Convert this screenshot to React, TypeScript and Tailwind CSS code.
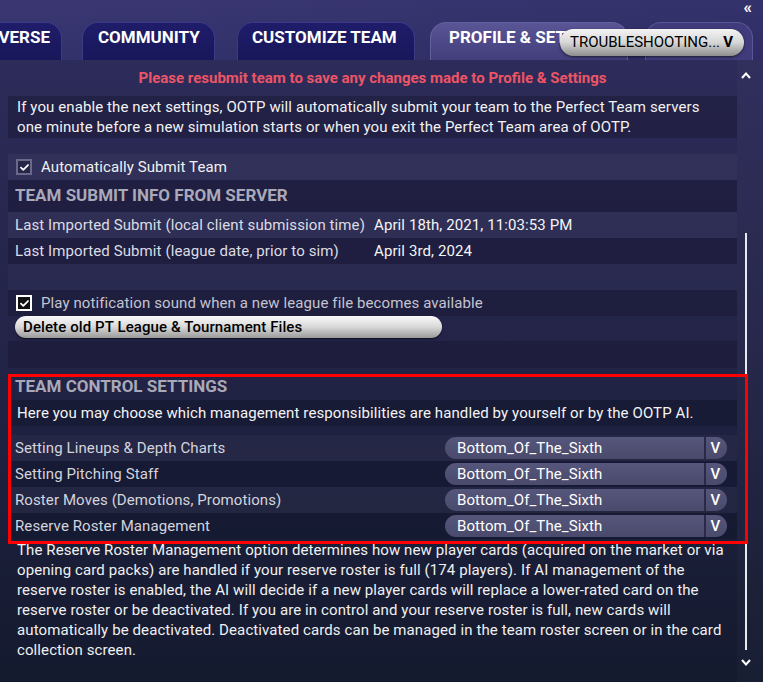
import React from "react";

const TABS = [
  { label: "VERSE", cls: "w-[70px] -ml-[8px] justify-end pr-[11px] rounded-tl-none" },
  { label: "COMMUNITY", cls: "w-[133px] ml-[20px] pl-[15px]" },
  { label: "CUSTOMIZE TEAM", cls: "w-[178px] ml-[22px] pl-[14px]" },
  { label: "PROFILE & SETTINGS", cls: "w-[198px] ml-[15px] pl-[18px]", active: true },
  { label: "", cls: "w-[108px] ml-[17px]", faded: true },
];

const CONTROL_ROWS = [
  "Setting Lineups & Depth Charts",
  "Setting Pitching Staff",
  "Roster Moves (Demotions, Promotions)",
  "Reserve Roster Management",
];

function Check({ bright }: { bright?: boolean }) {
  return (
    <span
      className={`flex h-[16px] w-[16px] items-center justify-center border-2 ${
        bright ? "border-white bg-[#111]" : "border-[#6a6a88] bg-[#26264a]"
      }`}
    >
      <svg width="9" height="7" viewBox="0 0 10 8" fill="none">
        <path d="M1 4.2l2.6 2.4L9 1.2" stroke="#fff" strokeWidth="2" strokeLinecap="round" strokeLinejoin="round" />
      </svg>
    </span>
  );
}

function Chevron({ up }: { up?: boolean }) {
  return (
    <svg width="10" height="7" viewBox="0 0 10 7" fill="none">
      <path d={up ? "M1 6l4-4.5L9 6" : "M1 1l4 4.5L9 1"} stroke="#fff" strokeWidth="2" strokeLinejoin="miter" />
    </svg>
  );
}

function Dropdown() {
  return (
    <div className="flex h-[22px] w-[282px] items-stretch overflow-hidden rounded-full bg-gradient-to-b from-[#56567c] to-[#4a4a6c]">
      <span className="flex-1 pl-[12px] text-[15px] leading-[22px] text-white">Bottom_Of_The_Sixth</span>
      <span className="w-[2px] bg-[#2a2a48]" />
      <span className="flex w-[21px] items-center justify-center pr-[2px] text-[15px] font-medium text-white">V</span>
    </div>
  );
}

export default function App() {
  return (
    <div
      className="relative h-[682px] w-[763px] overflow-hidden bg-gradient-to-b from-[#2f2d5e] via-[#232448] to-[#141a2e] text-white"
      style={{ fontFamily: "Roboto, 'Noto Sans', sans-serif" }}
    >
      {/* Tab strip */}
      <div className="relative h-[60px] bg-gradient-to-br from-[#3a3773] via-[#34326b] to-[#2e2c62]">
        <span className="absolute right-[11px] top-[-1px] text-[17px] font-bold leading-none text-white">«</span>
        <div className="flex items-end pt-[22px]">
          {TABS.map((t, i) => (
            <div
              key={i}
              className={`flex h-[38px] shrink-0 items-start pt-[2px] ${t.cls} rounded-t-[16px] border-x border-t ${
                t.active
                  ? "border-[#6460a0] bg-gradient-to-b from-[#5a5696] to-[#423e7c]"
                  : t.faded
                  ? "border-[#5a5798] bg-[#403c7c]"
                  : "border-[#3c3a86] bg-gradient-to-b from-[#1f1d6a] to-[#18175a]"
              }`}
            >
              <span className="whitespace-nowrap text-[17px] font-bold text-white">{t.label}</span>
            </div>
          ))}
        </div>
        <div className="absolute left-[560px] top-[29px] flex h-[27px] w-[184px] items-center justify-between rounded-full bg-gradient-to-b from-[#f4f4f4] via-[#d6d6d6] to-[#8e8e8e] pl-[10px] pr-[11px] shadow-[0_1px_3px_rgba(0,0,0,0.6)]">
          <span className="text-[15px] leading-none text-black">TROUBLESHOOTING...</span>
          <span className="text-[15px] font-bold leading-none text-black">V</span>
        </div>
      </div>

      {/* Body */}
      <div className="flex">
        <div className="w-[737px] pl-[8px] text-[15px] tracking-[0.1px]">
          <div className="flex h-[36px] items-center justify-center text-[15px] font-bold tracking-normal text-[#ec5566]">
            Please resubmit team to save any changes made to Profile &amp; Settings
          </div>

          <div className="whitespace-nowrap bg-[#1f1e3e]/70 px-[9px] py-[1px] leading-[20px] text-[#f2f2f2]">
            If you enable the next settings, OOTP will automatically submit your team to the Perfect Team servers
            <br />
            one minute before a new simulation starts or when you exit the Perfect Team area of OOTP.
          </div>

          <div className="h-[16px]" />
          <div className="flex h-[26px] items-center gap-[9px] bg-white/[0.04] pl-[8px] text-[#f0f0f0]">
            <Check />
            <span>Automatically Submit Team</span>
          </div>
          <div className="flex h-[32px] items-center bg-[#1c1b3a]/70 pl-[7px] text-[17px] font-bold tracking-normal text-[#a9a9b9]">
            TEAM SUBMIT INFO FROM SERVER
          </div>
          <div className="flex h-[26px] items-center bg-white/[0.04] pl-[7px] text-[#dcdce4]">
            <span className="w-[359px]">Last Imported Submit (local client submission time)</span>
            <span className="text-[#f4f4f4]">April 18th, 2021, 11:03:53 PM</span>
          </div>
          <div className="flex h-[26px] items-center bg-[#1c1b3a]/70 pl-[7px] text-[#dcdce4]">
            <span className="w-[359px]">Last Imported Submit (league date, prior to sim)</span>
            <span className="text-[#f4f4f4]">April 3rd, 2024</span>
          </div>
          <div className="h-[26px] bg-white/[0.02]" />
          <div className="flex h-[26px] items-center gap-[9px] bg-[#1c1b3a]/70 pl-[8px] text-[#c4c4d0]">
            <Check bright />
            <span>Play notification sound when a new league file becomes available</span>
          </div>
          <div className="flex h-[25px] items-start pl-[7px]">
            <div className="flex h-[22px] w-[427px] items-center rounded-full bg-gradient-to-b from-[#fafafa] via-[#d8d8d8] to-[#9a9a9a] pl-[8px] font-medium text-black shadow-[0_1px_2px_rgba(0,0,0,0.6)]">
              Delete old PT League &amp; Tournament Files
            </div>
          </div>
          <div className="h-[27px] bg-[#1c1b3a]/70" />
          <div className="h-[9px]" />

          {/* Team control section */}
          <div className="relative">
            <div className="h-[23px] pl-[7px] text-[17px] font-bold leading-[18px] tracking-normal text-[#a9a9b9]">TEAM CONTROL SETTINGS</div>
            <div className="flex h-[26px] items-center bg-[#161a33]/80 pl-[9px] text-[#f4f4f4]">
              Here you may choose which management responsibilities are handled by yourself or by the OOTP AI.
            </div>
            <div className="h-[9px]" />
            {CONTROL_ROWS.map((r, i) => (
              <div
                key={r}
                className={`flex h-[26px] items-center pl-[7px] text-[#d4d4dc] ${
                  i % 2 === 0 ? "bg-white/[0.03]" : "bg-[#141830]/70"
                }`}
              >
                <span className="w-[430px]">{r}</span>
                <Dropdown />
              </div>
            ))}
            <div className="h-[2px]" />
            <div className="pointer-events-none absolute -top-[3px] left-0 h-[170px] w-[740px] border-[3px] border-[#ff0000]" />
          </div>

          <p className="-mt-[1px] whitespace-nowrap pl-[9px] leading-[20px] text-[#f0f0f0]">
            The Reserve Roster Management option determines how new player cards (acquired on the market or via
            <br />
            opening card packs) are handled if your reserve roster is full (174 players). If AI management of the
            <br />
            reserve roster is enabled, the AI will decide if a new player cards will replace a lower-rated card on the
            <br />
            reserve roster or be deactivated. If you are in control and your reserve roster is full, new cards will
            <br />
            automatically be deactivated. Deactivated cards can be managed in the team roster screen or in the card
            <br />
            collection screen.
          </p>
        </div>

        {/* Scrollbar column */}
        <div className="flex h-[622px] w-[26px] flex-col items-center bg-white/[0.02] pr-[8px]">
          <div className="mt-[12px]">
            <Chevron up />
          </div>
          <div className="mt-[154px] h-[417px] w-[2px] bg-[#e8e8f0]" />
          <div className="mt-[9px]">
            <Chevron />
          </div>
        </div>
      </div>
    </div>
  );
}
